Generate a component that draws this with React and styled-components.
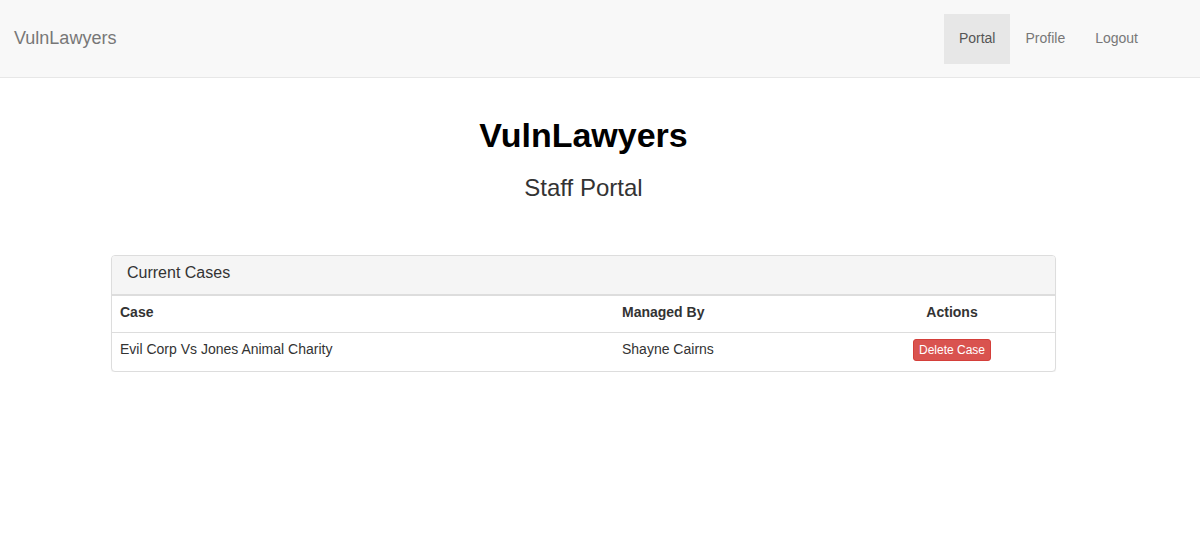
import { createGlobalStyle, styled } from "styled-components";

const GlobalStyle = createGlobalStyle`
  html, body {
    margin: 0;
    padding: 0;
    background: #fff;
  }
  body {
    font-family: "Liberation Sans", Arial, Helvetica, sans-serif;
    font-size: 14px;
    line-height: 1.42857;
    color: #333;
  }
  * {
    box-sizing: border-box;
  }
`;

const NAV_LINKS = [
  { name: "Portal", active: true },
  { name: "Profile" },
  { name: "Logout" },
];

const CASES = [
  { name: "Evil Corp Vs Jones Animal Charity", manager: "Shayne Cairns" },
];

const App = () => {
  return (
    <>
      <GlobalStyle />
      <Navbar>
        <Brand href="#">VulnLawyers</Brand>
        <NavList>
          {NAV_LINKS.map((link) => (
            <li key={link.name}>
              <NavLink href="#" $active={link.active}>
                {link.name}
              </NavLink>
            </li>
          ))}
        </NavList>
      </Navbar>
      <Main>
        <Title>VulnLawyers</Title>
        <Subtitle>Staff Portal</Subtitle>
        <Panel>
          <PanelHeading>
            <PanelTitle>Current Cases</PanelTitle>
          </PanelHeading>
          <Table>
            <colgroup>
              <col style={{ width: 502 }} />
              <col style={{ width: 235 }} />
              <col />
            </colgroup>
            <tbody>
              <tr>
                <HeadCell>Case</HeadCell>
                <HeadCell>Managed By</HeadCell>
                <HeadCell $center>Actions</HeadCell>
              </tr>
              {CASES.map((c) => (
                <tr key={c.name}>
                  <Cell>{c.name}</Cell>
                  <Cell>{c.manager}</Cell>
                  <Cell $center>
                    <DangerButton type="button">Delete Case</DangerButton>
                  </Cell>
                </tr>
              ))}
            </tbody>
          </Table>
        </Panel>
      </Main>
    </>
  );
};

export default App;

const Navbar = styled.nav`
  display: flex;
  align-items: center;
  justify-content: space-between;
  height: 78px;
  padding: 0 47px 0 0;
  background: #f8f8f8;
  border-bottom: 1px solid #e7e7e7;
`;

const Brand = styled.a`
  padding: 14px 15px 16px 14px;
  font-size: 18px;
  line-height: 20px;
  color: #777;
  text-decoration: none;
`;

const NavList = styled.ul`
  display: flex;
  list-style: none;
  margin: 1px 0 0;
  padding: 0;
`;

const NavLink = styled.a`
  display: block;
  padding: 14px 15px 16px;
  line-height: 20px;
  font-size: 14px;
  text-decoration: none;
  color: ${(p) => (p.$active ? "#555" : "#777")};
  background: ${(p) => (p.$active ? "#e7e7e7" : "transparent")};
`;

const Main = styled.main`
  width: 1167px;
  display: flex;
  flex-direction: column;
  align-items: center;
`;

const Title = styled.h1`
  margin: 39px 0 0;
  font-size: 34px;
  line-height: 1.1;
  font-weight: 700;
  color: #000;
`;

const Subtitle = styled.h3`
  margin: 21px 0 0;
  font-size: 24px;
  line-height: 1.1;
  font-weight: 400;
  color: #333;
`;

const Panel = styled.section`
  width: 945px;
  margin-top: 53px;
  border: 1px solid #ddd;
  border-radius: 4px;
  background: #fff;
  box-shadow: 0 1px 1px rgba(0, 0, 0, 0.05);
  overflow: hidden;
`;

const PanelHeading = styled.div`
  padding: 8px 15px 13px;
  background: #f5f5f5;
  border-bottom: 1px solid #ddd;
`;

const PanelTitle = styled.h3`
  margin: 0;
  font-size: 16px;
  line-height: 1.1;
  font-weight: 400;
  color: #333;
`;

const Table = styled.table`
  width: 100%;
  border-collapse: collapse;
  border-spacing: 0;
  table-layout: fixed;

  tr {
    border-top: 1px solid #ddd;
  }
`;

const HeadCell = styled.th`
  padding: 6px 8px 10px;
  line-height: 20px;
  font-weight: 700;
  text-align: ${(p) => (p.$center ? "center" : "left")};
`;

const Cell = styled.td`
  padding: 6px 8px 10px;
  line-height: 20px;
  vertical-align: top;
  text-align: ${(p) => (p.$center ? "center" : "left")};
`;

const DangerButton = styled.button`
  display: inline-block;
  padding: 1px 5px;
  font-family: inherit;
  font-size: 12px;
  line-height: 1.5;
  color: #fff;
  background: #d9534f;
  border: 1px solid #d43f3a;
  border-radius: 3px;
  cursor: pointer;
`;
